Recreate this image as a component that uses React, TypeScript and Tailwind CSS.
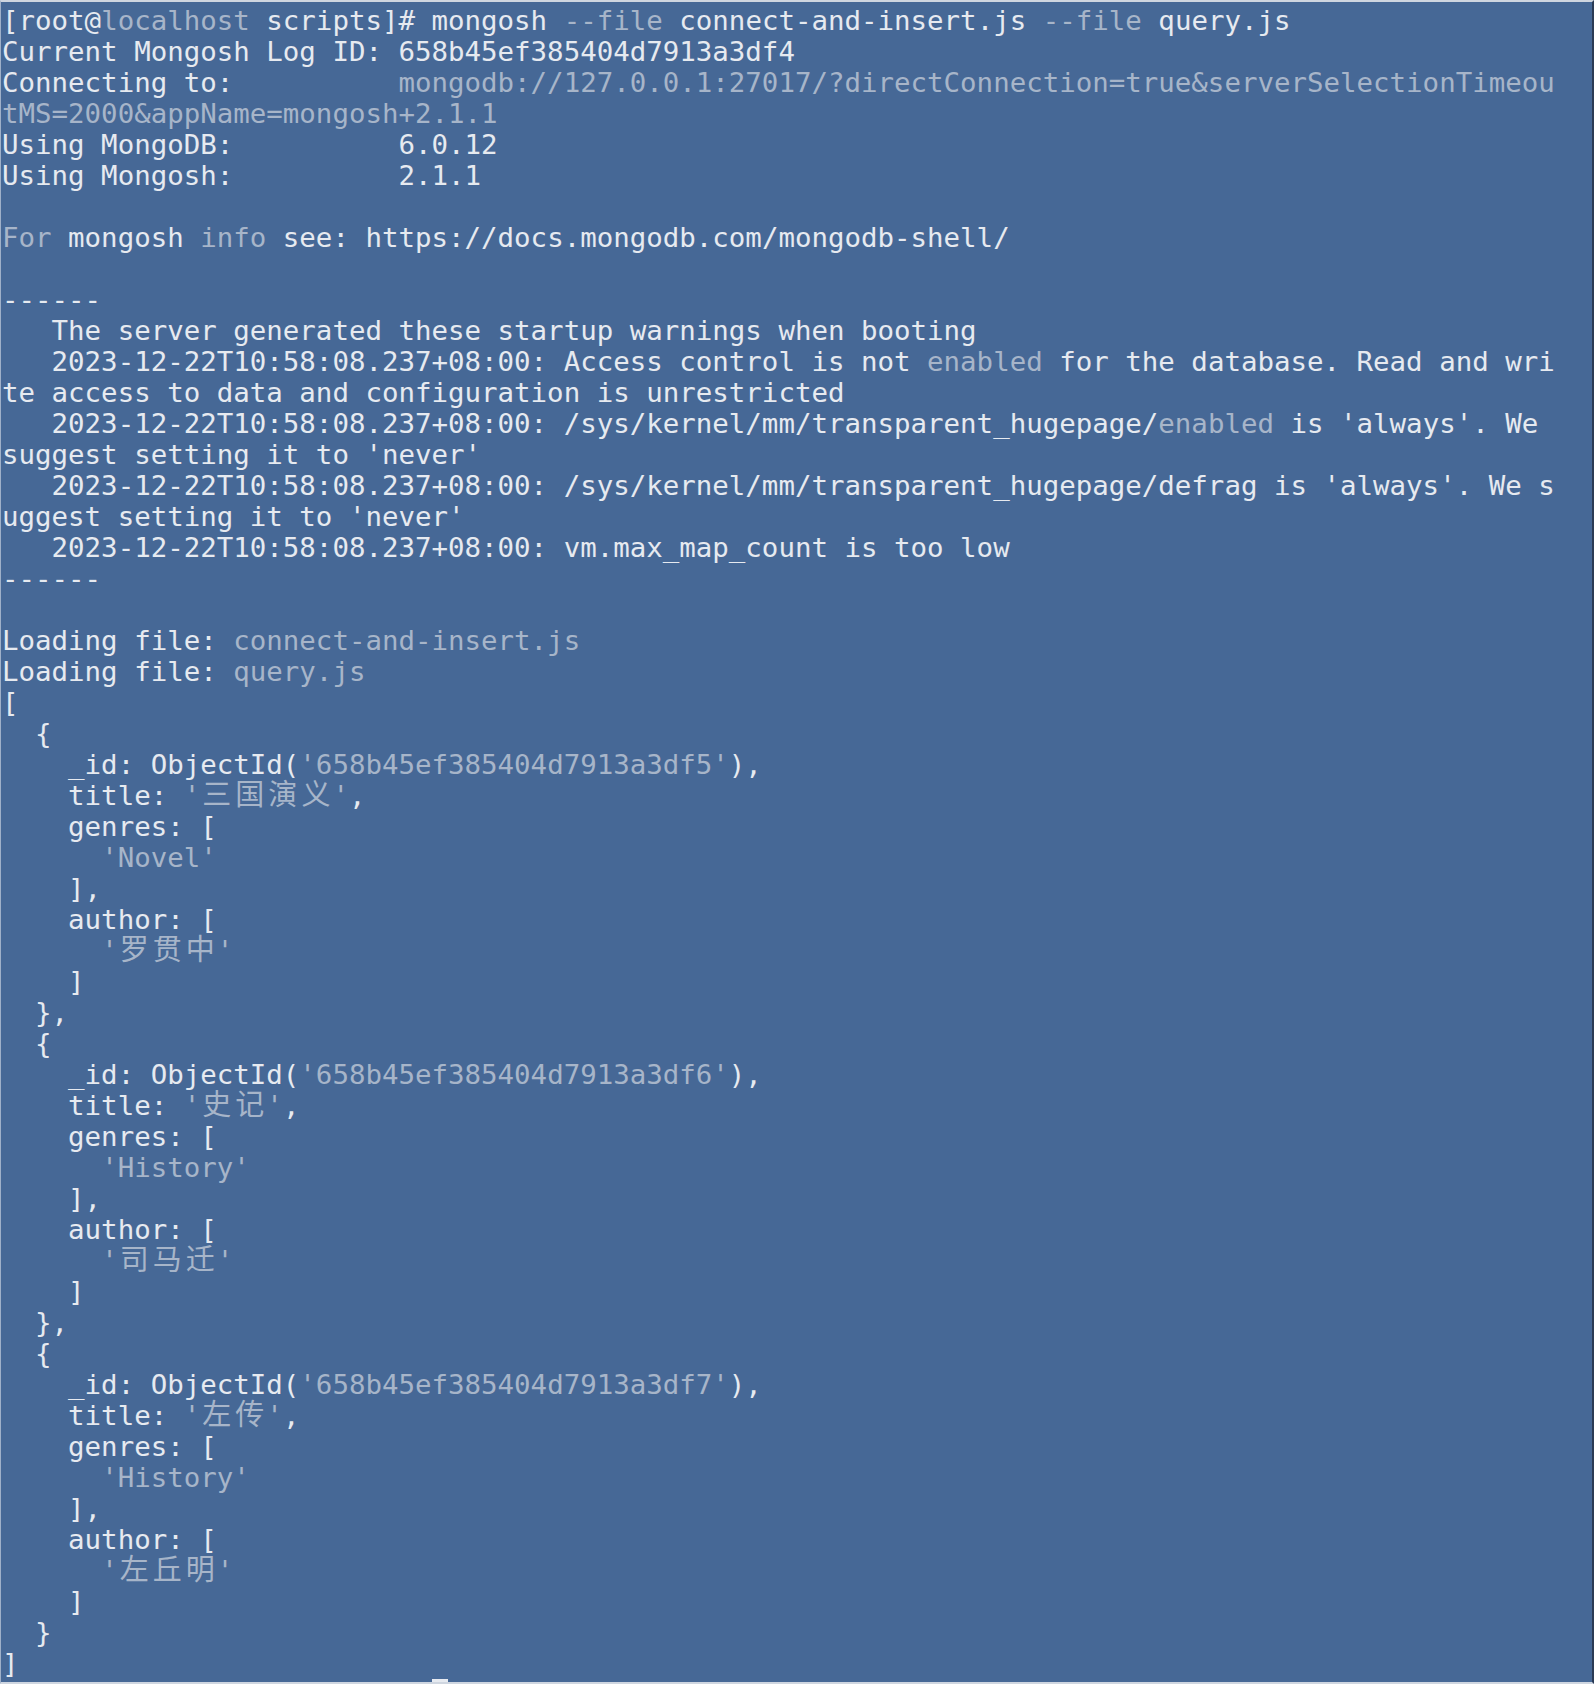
type Seg = [string, boolean?];

const lines: Seg[][] = [
  [["[root@"], ["localhost", true], [" scripts]# mongosh "], ["--file", true], [" connect-and-insert.js "], ["--file", true], [" query.js"]],
  [["Current Mongosh Log ID: 658b45ef385404d7913a3df4"]],
  [["Connecting to:          "], ["mongodb://127.0.0.1:27017/?directConnection=true&serverSelectionTimeou", true]],
  [["tMS=2000&appName=mongosh+2.1.1", true]],
  [["Using MongoDB:          6.0.12"]],
  [["Using Mongosh:          2.1.1"]],
  [],
  [["For", true], [" mongosh "], ["info", true], [" see: https://docs.mongodb.com/mongodb-shell/"]],
  [],
  [["------"]],
  [["   The server generated these startup warnings when booting"]],
  [["   2023-12-22T10:58:08.237+08:00: Access control is not "], ["enabled", true], [" for the database. Read and wri"]],
  [["te access to data and configuration is unrestricted"]],
  [["   2023-12-22T10:58:08.237+08:00: /sys/kernel/mm/transparent_hugepage/"], ["enabled", true], [" is 'always'. We"]],
  [["suggest setting it to 'never'"]],
  [["   2023-12-22T10:58:08.237+08:00: /sys/kernel/mm/transparent_hugepage/defrag is 'always'. We s"]],
  [["uggest setting it to 'never'"]],
  [["   2023-12-22T10:58:08.237+08:00: vm.max_map_count is too low"]],
  [["------"]],
  [],
  [["Loading file: "], ["connect-and-insert.js", true]],
  [["Loading file: "], ["query.js", true]],
  [["["]],
];

const books = [
  { id: "658b45ef385404d7913a3df5", title: "三国演义", genre: "Novel", author: "罗贯中", last: false },
  { id: "658b45ef385404d7913a3df6", title: "史记", genre: "History", author: "司马迁", last: false },
  { id: "658b45ef385404d7913a3df7", title: "左传", genre: "History", author: "左丘明", last: true },
];

books.forEach((b) => {
  lines.push(
    [["  {"]],
    [["    _id: ObjectId("], [`'${b.id}'`, true], ["),"]],
    [["    title: "], [`'${b.title}'`, true], [","]],
    [["    genres: ["]],
    [["      "], [`'${b.genre}'`, true]],
    [["    ],"]],
    [["    author: ["]],
    [["      "], [`'${b.author}'`, true]],
    [["    ]"]],
    [[b.last ? "  }" : "  },"]]
  );
});
lines.push([["]"]]);

function Text({ value }: { value: string }) {
  // CJK chars take two terminal cells (2 x 16.52px)
  const parts: React.ReactNode[] = [];
  let buf = "";
  Array.from(value).forEach((ch, i) => {
    if (ch.charCodeAt(0) > 0x2e80) {
      if (buf) parts.push(buf);
      buf = "";
      parts.push(
        <span key={i} className="inline-block w-[33.05px] text-center text-[29px] leading-[31px]">
          {ch}
        </span>
      );
    } else {
      buf += ch;
    }
  });
  if (buf) parts.push(buf);
  return <>{parts}</>;
}

export default function App() {
  return (
    <div
      className="w-[1594px] h-[1684px] overflow-hidden bg-[#466896] border-t-2 border-l border-r-2 border-b-2 border-t-[#cfd6e0] border-l-[#9fb0c8] border-r-[#2a3b55] border-b-[#cfd6e0] pt-[3px] pl-[1px] text-[#e6eaf0] text-[27.45px] leading-[31px]"
      style={{ fontFamily: '"DejaVu Sans Mono", "Noto Sans CJK SC", monospace' }}
    >
      {lines.map((line, i) => (
        <div key={i} className="h-[31px] whitespace-pre">
          {line.map(([text, dim], j) => (
            <span key={j} className={dim ? "text-[#a7b5c9]" : undefined}>
              <Text value={text} />
            </span>
          ))}
        </div>
      ))}
      <div className="h-[31px] whitespace-pre">
        [root@<span className="text-[#a7b5c9]">localhost</span> scripts]#{" "}
        <span className="inline-block w-[1ch] h-[28px] align-top bg-[#e6eaf0]" />
      </div>
    </div>
  );
}
